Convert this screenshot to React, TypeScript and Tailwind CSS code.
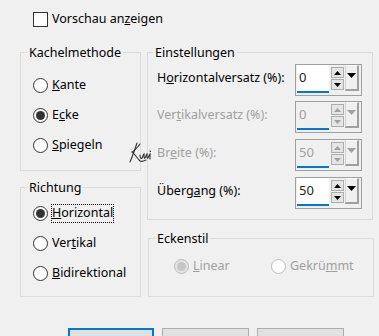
import type { ReactNode } from 'react'

const Tri = ({ up, color }: { up?: boolean; color: string }) => (
  <svg width="7" height="4" viewBox="0 0 7 4">
    <polygon points={up ? '0,4 7,4 3.5,0' : '0,0 7,0 3.5,4'} fill={color} />
  </svg>
)

const Radio = ({
  checked,
  disabled,
  focus,
  children,
}: {
  checked?: boolean
  disabled?: boolean
  focus?: boolean
  children: ReactNode
}) => (
  <div className="flex h-[30px] items-center">
    <span
      className={`flex h-[15px] w-[15px] shrink-0 items-center justify-center rounded-full border ${
        disabled ? (checked ? 'border-[#bcbcbc] bg-[#e4e4e4]' : 'border-[#bcbcbc] bg-white') : 'border-[#333333] bg-white'
      }`}
    >
      {checked && <span className={`h-[9px] w-[9px] rounded-full ${disabled ? 'bg-[#c6c6c6]' : 'bg-[#333333]'}`} />}
    </span>
    <span
      className={`ml-[3px] flex h-[19px] items-center border border-dotted ${
        focus ? 'border-black' : 'border-transparent'
      } ${disabled ? 'text-[#a0a0a0]' : 'text-black'}`}
    >
      {children}
    </span>
  </div>
)

const Spin = ({ value, disabled }: { value: string; disabled?: boolean }) => {
  const arrow = disabled ? '#a0a0a0' : '#000000'
  return (
    <div className="flex h-[32px] w-[67px] shrink-0 items-start border border-[#a0a0a0] bg-[#f0f0f0]">
      <div
        className={`ml-[1px] flex h-[28px] w-[32px] items-center border-b-2 border-[#0078d7] pl-[2px] text-[13px] ${
          disabled ? 'bg-[#f0f0f0] text-[#a0a0a0]' : 'bg-white text-[#222]'
        }`}
      >
        {value}
      </div>
      <div className="ml-[2px] mt-[2px] flex flex-col gap-[1px]">
        <div className="flex h-[11px] w-[13px] items-center justify-center border border-[#adadad] bg-[#e5e5e5]">
          <Tri up color={arrow} />
        </div>
        <div className="flex h-[11px] w-[13px] items-center justify-center border border-[#adadad] bg-[#e5e5e5]">
          <Tri color={arrow} />
        </div>
      </div>
      <div className="ml-[1px] flex h-[26px] w-[14px] justify-center border-b-2 border-l border-r-2 border-t border-b-[#a0a0a0] border-l-[#d4d4d4] border-r-[#a0a0a0] border-t-white bg-[#f0f0f0] pt-[7px]">
        <svg width="9" height="5" viewBox="0 0 9 5">
          <polygon points="0,0 9,0 4.5,5" fill={arrow} />
        </svg>
      </div>
    </div>
  )
}

const Row = ({ label, value, disabled, className }: { label: ReactNode; value: string; disabled?: boolean; className: string }) => (
  <div className={`flex items-center justify-between ${className}`}>
    <span className={`pb-[4px] ${disabled ? 'text-[#a0a0a0]' : 'text-black'}`}>{label}</span>
    <Spin value={value} disabled={disabled} />
  </div>
)

const Legend = ({ children, ml }: { children: ReactNode; ml: string }) => (
  <legend className={`px-[2px] leading-[17px] text-black ${ml}`}>{children}</legend>
)

export default function App() {
  return (
    <div className="relative h-[336px] w-[379px] overflow-hidden bg-[#f0f0f0] font-['Noto_Sans',sans-serif] text-[12.5px] text-black">
      {/* Vorschau */}
      <div className="mt-[12px] flex h-[15px] items-center pl-[33px]">
        <span className="h-[15px] w-[15px] border border-[#333333] bg-white" />
        <span className="ml-[4px]">
          Vorschau an<u>z</u>eigen
        </span>
      </div>

      <div className="ml-[20px] mt-[17px] flex gap-[6px]">
        {/* left column */}
        <div className="flex w-[121px] flex-col gap-[8px]">
          <fieldset className="h-[127px] border border-[#dcdcdc]">
            <Legend ml="ml-[6px]">Kachelmethode</Legend>
            <div className="pl-[12px] pt-[9px]">
              <Radio>
                <u>K</u>ante
              </Radio>
              <Radio checked>
                E<u>c</u>ke
              </Radio>
              <Radio>
                <u>S</u>piegeln
              </Radio>
            </div>
          </fieldset>
          <fieldset className="h-[118px] border border-[#dcdcdc]">
            <Legend ml="ml-[6px]">Richtung</Legend>
            <div className="pl-[12px] pt-[2px]">
              <Radio checked focus>
                <u>H</u>orizontal
              </Radio>
              <Radio>
                Ver<u>t</u>ikal
              </Radio>
              <Radio>
                <u>B</u>idirektional
              </Radio>
            </div>
          </fieldset>
        </div>

        {/* right column */}
        <div className="flex w-[227px] flex-col gap-[10px]">
          <fieldset className="h-[176px] w-[226px] border border-[#dcdcdc]">
            <Legend ml="ml-[5px]">Einstellungen</Legend>
            <div className="pl-[9px] pr-[10px] pt-[3px]">
              <Row className="" value="0" label={<>H<u>o</u>rizontalversatz (%):</>} />
              <Row className="mt-[5px]" value="0" disabled label={<>Ver<u>t</u>ikalversatz (%):</>} />
              <Row className="mt-[6px]" value="50" disabled label={<>Br<u>e</u>ite (%):</>} />
              <Row className="mt-[6px]" value="50" label={<>Überg<u>a</u>ng (%):</>} />
            </div>
          </fieldset>
          <fieldset className="ml-[1px] h-[67px] w-[226px] border border-[#dcdcdc]">
            <Legend ml="ml-[6px]">Eckenstil</Legend>
            <div className="flex pl-[25px] pt-[4px]">
              <div className="w-[97px]">
                <Radio checked disabled>
                  <u>L</u>inear
                </Radio>
              </div>
              <Radio disabled>
                Gekrü<u>m</u>mt
              </Radio>
            </div>
          </fieldset>
        </div>
      </div>

      {/* buttons */}
      <div className="ml-[68px] mt-[31px] flex gap-[8px]">
        <div className="h-[24px] w-[86px] border-2 border-[#0078d7] bg-[#e1e1e1]" />
        <div className="h-[24px] w-[87px] border border-[#adadad] bg-[#e1e1e1]" />
        <div className="h-[24px] w-[87px] border border-[#adadad] bg-[#e1e1e1]" />
      </div>

      {/* signature watermark */}
      <svg className="absolute left-[127px] top-[141px]" width="26" height="24" viewBox="0 0 26 24" fill="none" stroke="#333333" strokeWidth="1.1" strokeLinecap="round">
        <path d="M10 2 C8 8 6 14 3 21" />
        <path d="M13 3 C10 7 7 10 5 11 C8 13 10 17 13 20 C15 21 17 20 19 19" />
        <path d="M13 14 C13 17 14 18 15 17 C16 15 16 14 17 13 C17 16 17 18 18 17 C19 15 19 14 20 13 C20 16 20 18 21 17 C22 15 22 14 23 13 L23 18" />
        <path d="M23 10 L23.5 10.5" />
      </svg>
    </div>
  )
}
